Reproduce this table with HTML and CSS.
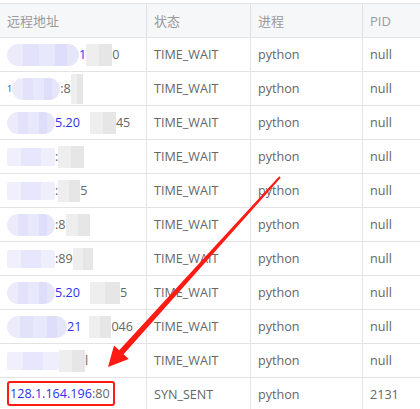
FILE: index.html
```html
<!DOCTYPE html>
<html lang="zh-CN">
<head>
<meta charset="utf-8">
<title>连接列表</title>
<link rel="stylesheet" href="styles.css">
</head>
<body>
<div class="table">
  <div class="row head">
    <div class="cell">远程地址</div>
    <div class="cell">状态</div>
    <div class="cell">进程</div>
    <div class="cell">PID</div>
  </div>
  <div class="row">
    <div class="cell addr"><span class="blob" style="width:72px"></span><span class="blue">1</span><span class="gray-blk" style="width:26px"></span><span>0</span></div>
    <div class="cell">TIME_WAIT</div><div class="cell">python</div><div class="cell">null</div>
  </div>
  <div class="row">
    <div class="cell addr"><span class="blue small">1</span><span class="blob" style="width:48px"></span><span>:8</span><span class="gray-blk tall" style="width:12px"></span></div>
    <div class="cell">TIME_WAIT</div><div class="cell">python</div><div class="cell">null</div>
  </div>
  <div class="row">
    <div class="cell addr"><span class="blob" style="width:48px"></span><span class="blue">5.20</span><span class="gray-blk" style="width:26px;margin-left:10px"></span><span>45</span></div>
    <div class="cell">TIME_WAIT</div><div class="cell">python</div><div class="cell">null</div>
  </div>
  <div class="row">
    <div class="cell addr"><span class="blob light" style="width:48px"></span><span>:</span><span class="gray-blk" style="width:26px"></span></div>
    <div class="cell">TIME_WAIT</div><div class="cell">python</div><div class="cell">null</div>
  </div>
  <div class="row">
    <div class="cell addr"><span class="blob light" style="width:48px"></span><span>:</span><span class="gray-blk" style="width:22px"></span><span>5</span></div>
    <div class="cell">TIME_WAIT</div><div class="cell">python</div><div class="cell">null</div>
  </div>
  <div class="row">
    <div class="cell addr"><span class="blob" style="width:48px"></span><span>:8</span><span class="gray-blk" style="width:24px"></span></div>
    <div class="cell">TIME_WAIT</div><div class="cell">python</div><div class="cell">null</div>
  </div>
  <div class="row">
    <div class="cell addr"><span class="blob light" style="width:48px"></span><span>:89</span><span class="gray-blk" style="width:20px"></span></div>
    <div class="cell">TIME_WAIT</div><div class="cell">python</div><div class="cell">null</div>
  </div>
  <div class="row">
    <div class="cell addr"><span class="blob" style="width:48px"></span><span class="blue">5.20</span><span class="gray-blk" style="width:30px;margin-left:10px"></span><span>5</span></div>
    <div class="cell">TIME_WAIT</div><div class="cell">python</div><div class="cell">null</div>
  </div>
  <div class="row">
    <div class="cell addr"><span class="blob" style="width:60px"></span><span class="blue">21</span><span class="gray-blk" style="width:22px;margin-left:8px"></span><span>046</span></div>
    <div class="cell">TIME_WAIT</div><div class="cell">python</div><div class="cell">null</div>
  </div>
  <div class="row">
    <div class="cell addr"><span class="blob light" style="width:52px"></span><span class="gray-blk" style="width:26px"></span><span>l</span></div>
    <div class="cell">TIME_WAIT</div><div class="cell">python</div><div class="cell">null</div>
  </div>
  <div class="row">
    <div class="cell addr"><span class="mark"><span class="blue">128.1.164.196</span>:80</span></div>
    <div class="cell">SYN_SENT</div><div class="cell">python</div><div class="cell">2131</div>
  </div>
</div>
<svg class="arrow" width="420" height="409" viewBox="0 0 420 409">
  <polygon points="279.3,176.3 280.7,177.7 123.6,354.2 128.8,358.9 108,367 114,345.5 119.2,350.2" fill="#ff1a14"/>
</svg>
</body>
</html>
```

FILE: styles.css
```css
html, body {
  margin: 0;
  padding: 0;
  background: #ffffff;
  overflow: hidden;
  width: 420px;
  height: 409px;
}
body {
  position: relative;
  font-family: "Open Sans", "Noto Sans CJK SC", sans-serif;
  font-size: 12.6px;
  color: #666666;
}
.table {
  margin-top: 3px;
  width: 440px;
  border-top: 1px solid #e3e3e3;
}
.row {
  display: grid;
  grid-template-columns: 147px 104px 112px 1fr;
  height: 34px;
  box-sizing: border-box;
  border-bottom: 1px solid #e3e3e3;
}
.head {
  background: #f6f7f9;
  color: #9a9a9a;
  font-size: 13px;
}
.cell {
  display: flex;
  align-items: center;
  padding-left: 7px;
  border-right: 1px solid #e3e3e3;
  white-space: nowrap;
  overflow: hidden;
}
.addr span {
  flex: none;
}
.blue {
  color: #2f2ff0;
}
.small {
  font-size: 9px;
}
.blob {
  display: inline-block;
  height: 22px;
  border-radius: 11px;
  background:
    linear-gradient(90deg, #ebebfc 0 22%, #e2e2fb 22% 44%, #e8e8fc 44% 66%, #dedefa 66% 84%, #e6e6fb 84% 100%);
}
.blob.light {
  height: 18px;
  border-radius: 2px;
  background:
    linear-gradient(90deg, #f0f0fd 0 30%, #e6e6fc 30% 70%, #eeeefd 70% 100%);
}
.gray-blk {
  display: inline-block;
  height: 22px;
  background: linear-gradient(90deg, #eeeeee 0 50%, #e6e6e6 50% 100%);
}
.gray-blk.tall {
  height: 30px;
}
.mark {
  display: inline-flex;
  align-items: center;
  box-sizing: border-box;
  width: 108px;
  height: 25px;
  margin-top: -3px;
  border: 2px solid #ff1a14;
  border-radius: 3px;
  padding-left: 1px;
}
.arrow {
  position: absolute;
  left: 0;
  top: 0;
  pointer-events: none;
}
```
